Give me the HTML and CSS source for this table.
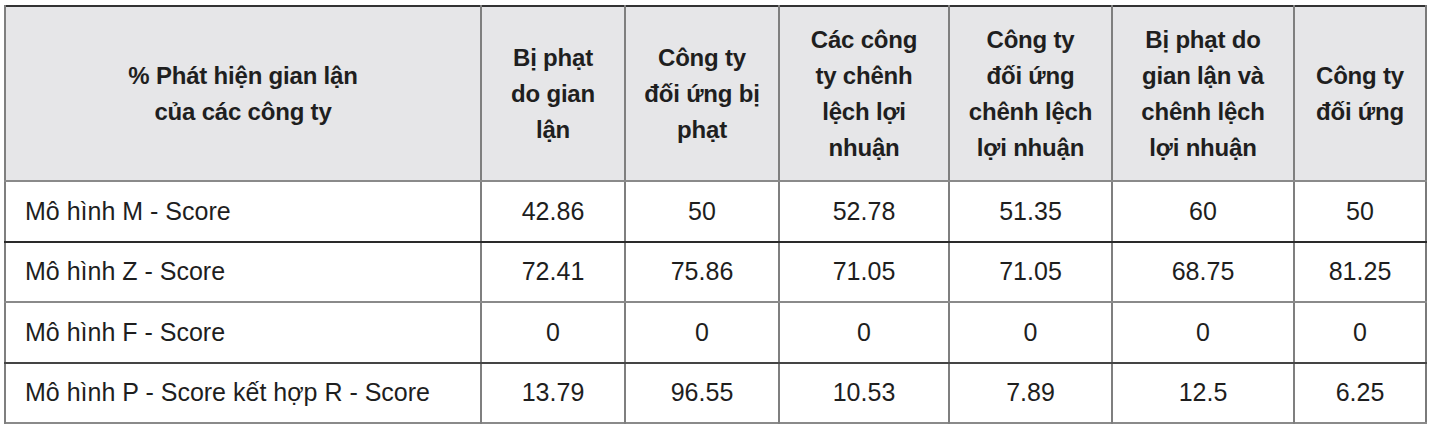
FILE: index.html
```html
<!DOCTYPE html>
<html lang="vi">
<head>
<meta charset="utf-8">
<title>Phát hiện gian lận</title>
<link rel="stylesheet" href="styles.css">
</head>
<body>
<table class="fraud-table">
  <colgroup>
    <col class="c-label">
    <col class="c1">
    <col class="c2">
    <col class="c3">
    <col class="c4">
    <col class="c5">
    <col class="c6">
  </colgroup>
  <thead>
    <tr class="head-row">
      <th class="head-label">% Phát hiện gian lận<br>của các công ty</th>
      <th>Bị phạt<br>do gian<br>lận</th>
      <th>Công ty<br>đối ứng bị<br>phạt</th>
      <th>Các công<br>ty chênh<br>lệch lợi<br>nhuận</th>
      <th>Công ty<br>đối ứng<br>chênh lệch<br>lợi nhuận</th>
      <th>Bị phạt do<br>gian lận và<br>chênh lệch<br>lợi nhuận</th>
      <th>Công ty<br>đối ứng</th>
    </tr>
  </thead>
  <tbody>
    <tr class="row-dark">
      <td class="label">Mô hình M - Score</td>
      <td>42.86</td><td>50</td><td>52.78</td><td>51.35</td><td>60</td><td>50</td>
    </tr>
    <tr class="row-light">
      <td class="label">Mô hình Z - Score</td>
      <td>72.41</td><td>75.86</td><td>71.05</td><td>71.05</td><td>68.75</td><td>81.25</td>
    </tr>
    <tr class="row-mid">
      <td class="label">Mô hình F - Score</td>
      <td>0</td><td>0</td><td>0</td><td>0</td><td>0</td><td>0</td>
    </tr>
    <tr class="row-last">
      <td class="label">Mô hình P - Score kết hợp R - Score</td>
      <td>13.79</td><td>96.55</td><td>10.53</td><td>7.89</td><td>12.5</td><td>6.25</td>
    </tr>
  </tbody>
</table>
</body>
</html>
```

FILE: styles.css
```css
html, body {
  background: #ffffff;
}
body {
  margin: 5px 0 0 4px;
  font-family: "Liberation Sans", Arial, sans-serif;
  color: #1e1e1e;
}
.fraud-table {
  border-collapse: collapse;
  table-layout: fixed;
  width: 1421px;
  border-top: 2px solid #333333;
  border-left: 2px solid #333333;
  border-right: 2px solid #7a7a7a;
  border-bottom: 2px solid #8a8a8a;
}
.c-label { width: 476px; }
.c1 { width: 144px; }
.c2 { width: 154px; }
.c3 { width: 170px; }
.c4 { width: 163px; }
.c5 { width: 182px; }
.c6 { width: 132px; }

.head-row {
  height: 175px;
  background: #e6e6e8;
}
.head-row th {
  font-weight: bold;
  font-size: 24px;
  line-height: 36px;
  letter-spacing: -0.2px;
  text-align: center;
  vertical-align: middle;
  padding: 0 4px;
  border-left: 2px solid #7f7f7f;
  border-bottom: 2px solid #8a8a8a;
  color: #1f1f1f;
}
.fraud-table tbody tr {
  height: 60.5px;
}
.fraud-table td {
  font-size: 25px;
  text-align: center;
  vertical-align: middle;
  padding: 0;
  border-left: 2px solid #7f7f7f;
}
.fraud-table td.label {
  text-align: left;
  padding-left: 19px;
}
.row-dark td { border-bottom: 2px solid #2a2a2a; }
.row-light td { border-bottom: 2px solid #8a8a8a; }
.row-mid td { border-bottom: 2px solid #444444; }
```
